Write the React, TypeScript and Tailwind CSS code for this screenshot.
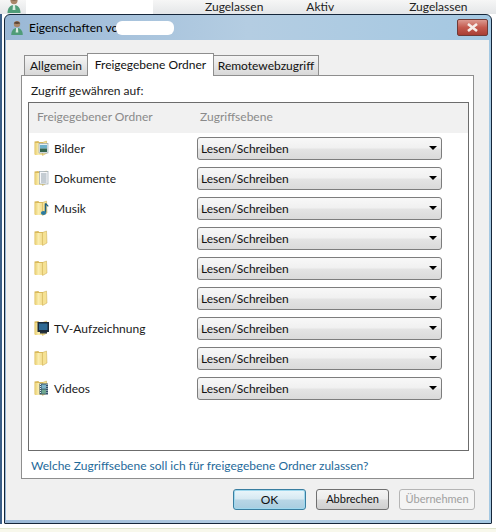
const sans = "font-['Lato','Open_Sans',Arial,sans-serif]";

function Folder({ kind }: { kind?: string }) {
  return (
    <svg width="15" height="16" viewBox="0 0 15 16" className="shrink-0">
      <defs>
        <linearGradient id="fg" x1="0" y1="0" x2="1" y2="0">
          <stop offset="0" stopColor="#e9cf72" />
          <stop offset="0.4" stopColor="#fbeeb0" />
          <stop offset="1" stopColor="#efd680" />
        </linearGradient>
      </defs>
      <path d="M0.500 1.500l4-.5.500 1h4.500v12.500h-9z" fill="#d9b95a" />
      <path d="M1 3h8l.5 12H1z" fill="url(#fg)" />
      <path d="M8.500 2.500l4-1.500.5 12-4.500 2.500z" fill="#f6e293" stroke="#c9a94e" strokeWidth=".5" />
      {kind === "bilder" && (
        <g>
          <rect x="5" y="3.500" width="9" height="9.500" fill="#e8eef0" stroke="#8b9aa3" strokeWidth=".6" />
          <rect x="6" y="5" width="7" height="3.500" fill="#6fb1cb" />
          <rect x="6" y="8.500" width="7" height="3.500" fill="#35664f" />
        </g>
      )}
      {kind === "dokumente" && (
        <g>
          <rect x="5.500" y="1.500" width="8.500" height="12.500" fill="#f7f8fa" stroke="#8b9aa3" strokeWidth=".6" />
          <path d="M7 4h5.500M7 6h5.500M7 8h5.500M7 10h5.500M7 12h5.500" stroke="#7a8a98" strokeWidth=".8" />
        </g>
      )}
      {kind === "musik" && (
        <g>
          <path d="M11.500 3.500v9" stroke="#1f5f7e" strokeWidth="1.600" />
          <path d="M11.500 3.500l2.800 2.800" stroke="#1f5f7e" strokeWidth="1.200" fill="none" />
          <ellipse cx="9.500" cy="13" rx="2.600" ry="2" fill="#2b7ba0" />
        </g>
      )}
      {kind === "tv" && (
        <g>
          <rect x="3.500" y="2" width="11.500" height="10" fill="#1c2a38" />
          <rect x="5" y="3.500" width="8.500" height="6.500" fill="#2f6a94" />
          <rect x="6" y="12" width="7" height="1.500" fill="#27333f" />
        </g>
      )}
      {kind === "videos" && (
        <g>
          <rect x="5.500" y="3.500" width="8.500" height="11" fill="#30506a" />
          <rect x="7.500" y="4.500" width="4.500" height="4.200" fill="#7fb4c8" />
          <rect x="7.500" y="9.500" width="4.500" height="4.200" fill="#6fa890" />
          <path d="M6.500 4v10M13 4v10" stroke="#dfe8ec" strokeWidth="1" strokeDasharray="1 1" />
        </g>
      )}
    </svg>
  );
}

function UserIcon({ size = 18 }: { size?: number }) {
  return (
    <svg width={size} height={size} viewBox="0 0 18 18" className="shrink-0">
      <circle cx="9" cy="4.600" r="3.600" fill="#a9876a" />
      <path d="M5.500 4c.5-3 6-3.500 7 0-2 .6-5 .6-7 0z" fill="#5b4636" />
      <path d="M2.500 17c0-5 2.500-8 6.500-8s6.500 3 6.500 8z" fill="#4f9c78" />
      <path d="M8 9h2l.5 5h-3z" fill="#d8ece0" />
    </svg>
  );
}

const rows = [
  { name: "Bilder", kind: "bilder" },
  { name: "Dokumente", kind: "dokumente" },
  { name: "Musik", kind: "musik" },
  { name: "", kind: "" },
  { name: "", kind: "" },
  { name: "", kind: "" },
  { name: "TV-Aufzeichnung", kind: "tv" },
  { name: "", kind: "" },
  { name: "Videos", kind: "videos" },
];

function Row({ name, kind }: { name: string; kind: string }) {
  return (
    <div className="flex h-[30px] items-center">
      <div className="flex w-[168px] items-center gap-[5px] pl-[5px]">
        <Folder kind={kind} />
        <span className="pt-[2px] text-[12px] text-[#1a1a1a]">{name}</span>
      </div>
      <div className="flex h-[23px] w-[245px] items-center justify-between rounded-[3px] border border-[#7d7d7d] bg-[linear-gradient(#f8f8f8_0%,#f0f0f0_48%,#e4e4e4_52%,#dadada_100%)] pl-[3px] pr-[4px]">
        <span className="pt-[2px] text-[12px] text-[#111]">Lesen/Schreiben</span>
        <span className="h-0 w-0 border-x-[4px] border-t-[4px] border-x-transparent border-t-black" />
      </div>
    </div>
  );
}

export default function App() {
  return (
    <div className={`flex h-[532px] w-[496px] flex-col overflow-hidden bg-white ${sans}`}>
      <div className="flex h-[14px] shrink-0 items-start overflow-hidden bg-[linear-gradient(#f6f6f6,#e4e6e8)] text-[12px] text-[#222]">
        <div className="ml-[5px] mt-[-4px] w-[21px]">
          <UserIcon size={18} />
        </div>
        <div className="h-[14px] w-[74px] bg-white" />
        <div className="h-[15px] w-[53px] bg-white" />
        <span className="ml-[52px] leading-[14px]">Zugelassen</span>
        <span className="ml-[43px] leading-[14px]">Aktiv</span>
        <span className="ml-[75px] leading-[14px]">Zugelassen</span>
      </div>
      <div className="flex h-[510px] shrink-0">
        <div className="h-full w-[2px] bg-[#3c5f88]" />
        <div className="ml-[2px] flex h-[510px] w-[488px] shrink-0 flex-col rounded-t-[6px] rounded-b-[1px] border border-[#15263a] bg-[linear-gradient(90deg,#9ab8d6,#b4cde2_50%,#a4c8e2)] pb-[3px] pr-[2px]">
          <div className="flex h-[25px] shrink-0 items-center">
            <div className="ml-[4px] mr-[4px]">
              <UserIcon size={16} />
            </div>
            <span className="text-[12px] text-black">Eigenschaften vo</span>
            <div className="ml-[-2px] h-[14px] w-[58px] rounded-[6px] bg-white" />
            <div className="ml-auto mr-[1px] mt-[-1px] flex h-[17px] w-[31px] items-center justify-center rounded-[2px] border border-[#6e3a36] bg-[linear-gradient(#dc9a90,#c45a4e_50%,#a83e34)]">
              <svg width="13" height="9" viewBox="0 0 13 9">
                <path d="M2 1l9 7M11 1L2 8" stroke="#f6eeea" strokeWidth="2.600" />
              </svg>
            </div>
          </div>
          <div className="ml-[1px] flex min-h-0 flex-1 flex-col bg-[#f0f0f0] pl-[15px] pr-[14px] pt-[13px]">
            <div className="relative z-10 flex h-[23px] shrink-0 items-end pl-[3px]">
              <div className="mb-[1px] flex h-[20px] w-[64px] items-center justify-center border border-b-0 border-[#8e8e8e] bg-[linear-gradient(#f4f4f4,#d8d8d8)] text-[12px] text-[#111]">
                Allgemein
              </div>
              <div className="ml-[-1px] flex h-[23px] w-[127px] items-start justify-center border border-b-0 border-[#8e8e8e] bg-white pt-[2px] text-[12px] text-[#111]">
                Freigegebene Ordner
              </div>
              <div className="mb-[1px] ml-[-1px] flex h-[20px] w-[106px] items-center justify-center border border-b-0 border-[#8e8e8e] bg-[linear-gradient(#f4f4f4,#d8d8d8)] text-[12px] text-[#111]">
                Remotewebzugriff
              </div>
            </div>
            <div className="mt-[-1px] flex h-[404px] w-[453px] shrink-0 flex-col border border-[#8e8e8e] bg-white px-[6px]">
              <div className="h-[26px] shrink-0 pl-[3px] pt-[7px] text-[12px] leading-[16px] text-[#1a1a1a]">
                Zugriff gewähren auf:
              </div>
              <div className="flex h-[349px] w-[441px] shrink-0 flex-col border border-[#6c6c6c]">
                <div className="flex h-[30px] shrink-0 items-center bg-[#f1f1f1] pb-[2px] pl-[8px] text-[12px] text-[#8a8a8a]">
                  <span className="w-[163px]">Freigegebener Ordner</span>
                  <span>Zugriffsebene</span>
                </div>
                <div className="flex flex-col">
                  {rows.map((r, i) => (
                    <Row key={i} name={r.name} kind={r.kind} />
                  ))}
                </div>
              </div>
              <div className="pl-[3px] pt-[7px] text-[12px] leading-[16px] text-[#1f6a9a]">
                Welche Zugriffsebene soll ich für freigegebene Ordner zulassen?
              </div>
            </div>
            <div className="mt-[10px] flex items-center justify-end">
              <div className="flex h-[21px] w-[73px] items-center justify-center rounded-[3px] border border-[#3a7ea0] bg-[linear-gradient(#eaf6fb,#d6e9f2_48%,#b8d6e6_52%,#a8cde0)] text-[12px] text-[#111] shadow-[inset_0_0_0_1px_#9fd8ee]">
                OK
              </div>
              <div className="ml-[10px] flex h-[21px] w-[73px] items-center justify-center rounded-[3px] border border-[#707070] bg-[linear-gradient(#f4f4f4,#ebebeb_48%,#dcdcdc_52%,#cfcfcf)] text-[11px] text-[#111]">
                Abbrechen
              </div>
              <div className="ml-[10px] flex h-[21px] w-[76px] items-center justify-center rounded-[3px] border border-[#b5b5b5] bg-[#f4f4f4] text-[11px] text-[#a0a0a0]">
                Übernehmen
              </div>
            </div>
          </div>
        </div>
      </div>
      <div className="mt-[4px] h-[1px] bg-[#dfe6cf]" />
      <div className="min-h-0 flex-1 bg-[#f8f8ec]" />
    </div>
  );
}
